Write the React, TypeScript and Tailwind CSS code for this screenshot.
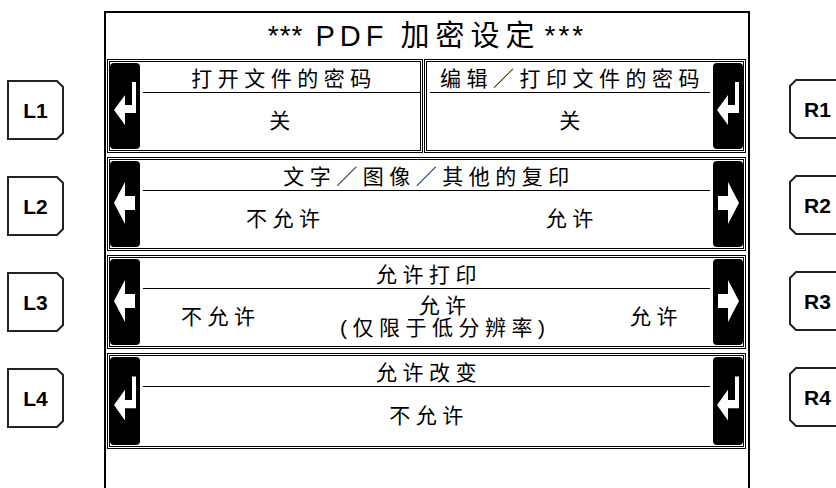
import type { ReactNode } from "react";

const FONT = "font-['Liberation_Sans','Noto_Sans_CJK_SC',sans-serif]";

type Icon = "enter" | "left" | "right";

const SHAPES: Record<Icon, string> = {
  enter: "4,47 15,32 15,42 22,42 22,19 26,19 26,50 15,50 15,62",
  left: "4,42 15,21 15,35 25,35 25,49 15,49 15,63",
  right: "26,42 15,21 15,35 5,35 5,49 15,49 15,63",
};

function SoftKey({ icon }: { icon: Icon }) {
  return (
    <div className="w-[30px] shrink-0 self-stretch bg-black rounded-[4px]">
      <svg viewBox="0 0 30 86" preserveAspectRatio="none" className="w-full h-full">
        <polygon points={SHAPES[icon]} fill="#fff" />
      </svg>
    </div>
  );
}

function SideKey({ label, side }: { label: string; side: "l" | "r" }) {
  const pts =
    side === "l"
      ? "1,1 50,1 56,7 56,53 50,59 1,59"
      : "7,1 56,1 56,59 7,59 1,53 1,7";
  return (
    <div className="relative w-[57px] h-[60px] flex items-center justify-center">
      <svg viewBox="0 0 57 60" className="absolute inset-0 w-full h-full">
        <polygon points={pts} fill="none" stroke="#222" strokeWidth="2" />
      </svg>
      <span className="relative text-[21px] font-bold text-black leading-none">{label}</span>
    </div>
  );
}

function Header({ children, className = "" }: { children: ReactNode; className?: string }) {
  return (
    <div className={`h-[30px] border-b border-black flex items-end justify-center pb-[1px] ${className}`}>
      <span className="text-[21px] leading-[24px] tracking-[5.5px] pl-[5px]">{children}</span>
    </div>
  );
}

function Value({ children }: { children: ReactNode }) {
  return <span className="text-[21px] leading-[24px] tracking-[5.5px] pl-[5px]">{children}</span>;
}

export default function App() {
  return (
    <div className={`w-[836px] h-[488px] overflow-hidden bg-white text-black flex ${FONT}`}>
      {/* left keys */}
      <div className="w-[104px] shrink-0 flex flex-col gap-[36px] pt-[80px] pl-[7px]">
        <SideKey label="L1" side="l" />
        <SideKey label="L2" side="l" />
        <SideKey label="L3" side="l" />
        <SideKey label="L4" side="l" />
      </div>

      {/* screen */}
      <div className="w-[646px] h-[490px] shrink-0 mt-[11px] border-2 border-b-0 border-black flex flex-col">
        <div className="h-[46px] flex items-center justify-center leading-none">
          <span className="text-[28px] tracking-[1px]">***</span>
          <span className="ml-[12px] text-[29px] tracking-[5px]">PDF</span>
          <span className="ml-[12px] text-[29px] tracking-[6px]">加密设定</span>
          <span className="ml-[4px] text-[28px] tracking-[3px]">***</span>
        </div>

        <div className="flex flex-col gap-[4px] pl-[1px] pr-[2px]">
          {/* row 1 */}
          <div className="h-[94px] flex gap-[1px]">
            <div className="w-[316px] border-[3px] border-double border-black flex py-[1px]">
              <SoftKey icon="enter" />
              <div className="flex-1 flex flex-col">
                <Header className="ml-[3px]">打开文件的密码</Header>
                <div className="flex-1 flex items-center justify-center">
                  <Value>关</Value>
                </div>
              </div>
            </div>
            <div className="flex-1 border-[3px] border-double border-black flex py-[1px]">
              <div className="flex-1 flex flex-col">
                <Header className="ml-[3px] mr-[3px]">编辑／打印文件的密码</Header>
                <div className="flex-1 flex items-center justify-center">
                  <Value>关</Value>
                </div>
              </div>
              <SoftKey icon="enter" />
            </div>
          </div>

          {/* row 2 */}
          <div className="h-[94px] border-[3px] border-double border-black flex py-[1px]">
            <SoftKey icon="left" />
            <div className="flex-1 flex flex-col">
              <Header className="mx-[3px]">文字／图像／其他的复印</Header>
              <div className="flex-1 grid grid-cols-2 items-center justify-items-center">
                <Value>不允许</Value>
                <Value>允许</Value>
              </div>
            </div>
            <SoftKey icon="right" />
          </div>

          {/* row 3 */}
          <div className="h-[94px] border-[3px] border-double border-black flex py-[1px]">
            <SoftKey icon="left" />
            <div className="flex-1 flex flex-col">
              <Header className="mx-[3px]">允许打印</Header>
              <div className="flex-1 flex items-center justify-between pl-[36px] pr-[30px]">
                <Value>不允许</Value>
                <div className="flex flex-col items-center text-[21px] leading-[22px] tracking-[5.5px] pl-[5px]">
                  <span>允许</span>
                  <span>(仅限于低分辨率)</span>
                </div>
                <Value>允许</Value>
              </div>
            </div>
            <SoftKey icon="right" />
          </div>

          {/* row 4 */}
          <div className="h-[96px] border-[3px] border-double border-black flex py-[1px]">
            <SoftKey icon="enter" />
            <div className="flex-1 flex flex-col">
              <Header className="mx-[3px]">允许改变</Header>
              <div className="flex-1 flex items-center justify-center">
                <Value>不允许</Value>
              </div>
            </div>
            <SoftKey icon="enter" />
          </div>
        </div>
      </div>

      {/* right keys */}
      <div className="shrink-0 flex flex-col gap-[36px] pt-[79px] pl-[39px]">
        <SideKey label="R1" side="r" />
        <SideKey label="R2" side="r" />
        <SideKey label="R3" side="r" />
        <SideKey label="R4" side="r" />
      </div>
    </div>
  );
}
